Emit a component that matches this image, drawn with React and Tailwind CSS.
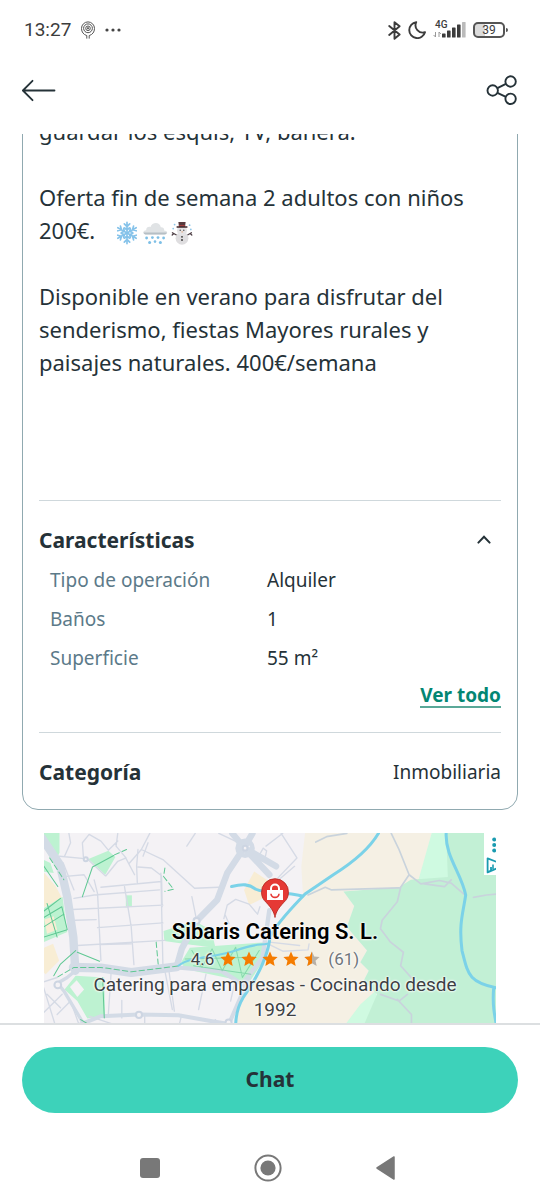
import React, { useState } from 'react';

const FEATURES = [
  { label: 'Tipo de operación', value: 'Alquiler' },
  { label: 'Baños', value: '1' },
  { label: 'Superficie', value: '55 m²' },
];

const SIGNAL_BARS = [
  { x: 0, h: 4 },
  { x: 5, h: 7 },
  { x: 10, h: 10 },
  { x: 15, h: 13 },
];

const STAR = 'M8 0.6 L10.2 5.6 L15.6 6.1 L11.5 9.7 L12.7 15 L8 12.2 L3.3 15 L4.5 9.7 L0.4 6.1 L5.8 5.6 Z';

function StatusBar() {
  return (
    <div className="flex h-[60px] items-center justify-between pl-6 pr-8 font-[Roboto,sans-serif] text-[#3c3c3c]">
      <div className="flex items-center">
        <span className="text-[19px] leading-6">13:27</span>
        <svg className="ml-2.5 h-[18px] w-[14px]" viewBox="0 0 14 18" fill="none" stroke="#555" strokeWidth="1">
          <path d="M5.8 17.6 V14.6 C2.5 13.6 0.5 11 0.5 7.5 A6.5 6.6 0 0 1 13.5 7.5 C13.5 11 11.5 13.6 8.2 14.6 V17.6" />
          <circle cx="7" cy="7.3" r="4.4" />
          <circle cx="7" cy="7.3" r="2.3" />
          <circle cx="7" cy="7.3" r="0.7" fill="#555" />
        </svg>
        <svg className="ml-2.5 h-1 w-4" viewBox="0 0 16 4" fill="#444">
          <circle cx="2" cy="2" r="1.6" />
          <circle cx="8" cy="2" r="1.6" />
          <circle cx="14" cy="2" r="1.6" />
        </svg>
      </div>

      <div className="flex items-center">
        <svg className="h-[19px] w-[13px]" viewBox="0 0 13 19" fill="none" stroke="#3c3c3c" strokeWidth="1.9" strokeLinejoin="round" strokeLinecap="round">
          <path d="M1.2 5 L11.6 13.6 L6.5 17.8 V1.2 L11.6 5.2 L1.2 14" />
        </svg>
        <svg className="ml-[7px] h-[18px] w-[18px]" viewBox="0 0 18 18" fill="none" stroke="#3c3c3c" strokeWidth="1.9" strokeLinejoin="round">
          <path d="M8.2 1.2 A8 8 0 1 0 17 11.2 A7.3 7.3 0 0 1 8.2 1.2 Z" />
        </svg>
        <div className="relative ml-[7px] h-[18px] w-[33px]">
          <span className="absolute left-0.5 -top-0.5 text-[10px] font-medium leading-3">4G</span>
          <svg className="h-[18px] w-[33px]" viewBox="0 0 33 18">
            <path d="M2.5 11 V16 L0.6 14 M6 16 V11 L7.9 13" fill="none" stroke="#999" strokeWidth="1" />
            <g transform="translate(9 0)">
              {SIGNAL_BARS.map(b => (
                <rect key={b.x} x={b.x} y={16.5 - b.h} width="3.6" height={b.h} rx="0.6" fill="#3c3c3c" />
              ))}
              <rect x="20" y="1" width="3.6" height="15.5" rx="0.6" fill="#bbb" />
            </g>
          </svg>
        </div>
        <div className="ml-[7px] flex items-center">
          <span className="flex h-4 w-8 items-center justify-center rounded-[5px] border-2 border-[#555] bg-[linear-gradient(90deg,#dcdcdc_35%,white_35%)] text-xs leading-3">39</span>
          <span className="ml-px h-1 w-0.5 rounded-r bg-[#555]" />
        </div>
      </div>
    </div>
  );
}

function TopBar() {
  return (
    <header className="flex h-[74px] items-start justify-between px-[22px] pt-[15px]">
      <button type="button" aria-label="Volver">
        <svg className="h-[30px] w-[34px]" viewBox="0 0 34 30" fill="none" stroke="#253238" strokeWidth="1.8" strokeLinecap="round" strokeLinejoin="round">
          <path d="M32.5 15.5 H1.2 M10.5 5.8 L0.9 15.5 L10.5 25.2" />
        </svg>
      </button>
      <button type="button" aria-label="Compartir">
        <svg className="h-[30px] w-[32px]" viewBox="0 0 32 30" fill="none" stroke="#253238" strokeWidth="1.9">
          <circle cx="6.7" cy="15.5" r="5.2" />
          <circle cx="24.6" cy="6.5" r="5.2" />
          <circle cx="24.6" cy="23.8" r="5.2" />
          <path d="M11.4 13.2 L19.9 8.8 M11.4 17.8 L19.9 21.8" />
        </svg>
      </button>
    </header>
  );
}

function Snowflake() {
  return (
    <svg className="h-6 w-6" viewBox="0 0 24 24" fill="none" stroke="#86c3ea" strokeWidth="1.7" strokeLinecap="round">
      {[0, 60, 120, 180, 240, 300].map(a => (
        <path key={a} transform={`rotate(${a} 12 12)`} d="M12 12 V1.4 M12 5.6 L9.3 2.9 M12 5.6 L14.7 2.9 M12 9 L9.6 6.8 M12 9 L14.4 6.8" />
      ))}
    </svg>
  );
}

function SnowCloud() {
  return (
    <svg className="h-6 w-[26px]" viewBox="0 0 26 24">
      <path d="M4.5 13.5 C0.5 13.5 0.2 9.6 4.2 9.2 C4 6.4 6.6 5 8.6 6 C9.6 1.2 17.6 0 18.8 6.2 C21.4 6 22.6 7.6 22 9.4 C26.4 9.6 26 13.5 22 13.5 Z" fill="#e0e3e5" />
      <path d="M1.5 11.4 H24.8 C24.6 12.8 23.6 13.6 22 13.6 H4.5 C2.8 13.6 1.8 12.8 1.5 11.4 Z" fill="#b6bfc5" />
      <g fill="#7dbfe6">
        <circle cx="4.6" cy="17" r="1.4" />
        <circle cx="10.4" cy="16.6" r="1.4" />
        <circle cx="16" cy="16.6" r="1.4" />
        <circle cx="21.6" cy="17" r="1.4" />
        <circle cx="7.6" cy="21.4" r="1.5" />
        <circle cx="13" cy="20.6" r="1.3" />
        <circle cx="18.4" cy="21.4" r="1.5" />
      </g>
    </svg>
  );
}

function Snowman() {
  return (
    <svg className="h-6 w-[22px]" viewBox="0 0 22 24">
      <path d="M5.4 14 L1.4 11.8 M1.2 14 L2.8 12.6 M16.6 14 L20.4 11.8 M20.8 14 L19.2 12.6" stroke="#4e3f45" strokeWidth="1.3" strokeLinecap="round" />
      <circle cx="11" cy="17.3" r="6.4" fill="#dfdee0" />
      <circle cx="11" cy="9.6" r="5" fill="#e5e4e6" />
      <path d="M7.4 1 H14.6 L14 6 H8 Z" fill="#573a3e" />
      <path d="M5.6 5.2 H16.4 V6.8 H5.6 Z" fill="#4b3135" />
      <path d="M7.9 4 H14.1 V5 H7.9 Z" fill="#a33d3d" />
      <circle cx="9.2" cy="9.2" r="0.7" fill="#444" />
      <circle cx="12.8" cy="9.2" r="0.7" fill="#444" />
      <path d="M10.6 10.3 L12.4 11 L10.6 11.4 Z" fill="#e08a4c" />
      <circle cx="11" cy="15.8" r="0.9" fill="#333" />
      <circle cx="11" cy="19" r="0.9" fill="#333" />
      <g fill="#8fc6e8">
        <circle cx="3.6" cy="3.6" r="0.9" />
        <circle cx="2.2" cy="7.6" r="0.9" />
        <circle cx="18.6" cy="4.2" r="0.9" />
        <circle cx="19.8" cy="8.4" r="0.9" />
      </g>
    </svg>
  );
}

function StreetMap() {
  return (
    <svg className="absolute inset-0 h-full w-full" viewBox="24 21 1356 573" preserveAspectRatio="xMidYMin slice" fill="none" strokeLinejoin="round" strokeLinecap="round" aria-hidden="true">
      <rect x="0" y="0" width="1400" height="700" fill="#f4f2f5" />

      {/* built-up and open land */}
      <g fill="#f5f0e4">
        <path d="M806 21 H1182 L1145 165 L1085 182 L920 195 L952 238 L930 300 L990 370 L970 405 L995 430 L980 460 L1020 490 L920 597 H600 L604 550 L690 400 L700 310 L800 208 L795 120 Z" />
        <path d="M655 135 L700 165 L690 210 L640 235 L625 190 Z" fill="#f8edd4" />
        <path d="M24 130 L66 180 L85 215 L24 245 Z" fill="#f8edd4" />
        <path d="M24 365 L58 350 L76 400 L36 440 L24 430 Z" fill="#f8edd4" />
      </g>
      <path d="M1182 21 H1228 L1232 160 L1140 170 Z M920 597 L970 530 L1015 490 L1030 540 L980 597 Z" fill="#cffae1" />
      <path d="M1225 21 H1400 V620 H968 L1020 500 L980 460 L995 430 L970 405 L990 370 L930 300 L952 238 L920 195 L1085 182 L1120 160 L1230 152 Z" fill="#c2f0d5" />

      {/* parks */}
      <g fill="#bdf2d1">
        <path d="M28 21 H77 V80 L60 115 L30 60 Z" />
        <path d="M163 98 L222 74 L243 92 L213 145 Z" />
        <path d="M274 206 H292 V240 H274 Z" />
        <path d="M24 98 L50 110 L60 140 L24 135 Z" />
        <path d="M24 248 L86 210 L100 315 L30 345 L24 330 Z" />
        <path d="M125 445 L210 450 L212 562 L160 572 L130 520 L92 486 Z" />
        <path d="M386 312 L478 282 L528 310 L540 362 L462 352 L388 342 Z" />
        <path d="M438 405 L464 362 L694 345 L676 410 L640 465 L450 425 Z" />
      </g>
      <path d="M32 278 L60 268 L70 308 L40 320 Z" fill="#f8edd4" />
      <path d="M108 478 L128 458 L150 486 L130 508 Z" fill="#f4f2f5" />

      {/* minor streets */}
      <g stroke="#d5dae5" strokeWidth="4">
        <path d="M77 90 L160 98 L213 148 M105 22 L110 50 L92 90 M148 92 L145 50 L165 25 L200 45 L222 72 M222 72 L250 45 M250 22 L245 60 L272 92 L300 145 M285 110 L320 70 L345 22 M320 70 L384 100 L478 185 L550 182 M215 148 L250 105 L275 95" />
        <path d="M95 150 L150 145 L180 195 M88 110 L120 190 M120 215 L180 205 L374 190 M180 160 L190 200 L200 400 M200 182 L380 165 M310 122 L350 125 L380 148 L382 240 M310 70 L306 120 L308 168 M115 248 L384 235 M124 280 L186 278 M190 302 L384 288 M270 180 L290 300 L298 412 M378 140 L384 410 M130 355 L390 340 M196 352 L290 350" />
        <path d="M455 60 L480 22 M470 210 L484 280 M550 22 L610 50 M565 275 L575 235 L600 218 L640 232 L665 262 L672 240 M580 290 L568 262 M390 430 L412 545 M402 430 L418 550 M512 440 L490 545 M600 455 L585 520 M70 560 L110 520 L135 590 M24 465 L70 450 M40 500 L80 540 M24 560 L85 500 M165 565 L240 590 M262 518 V570 M440 560 L430 600 M540 575 L520 600 M330 560 V600 M230 440 L222 560 M30 480 L64 590" />
        <path d="M666 94 L682 66 L692 74 L688 92 L668 84 M735 22 L782 95 L725 155 M740 22 L690 60 M775 120 L722 165 M696 350 L740 372 L815 368 L818 350 M700 345 L790 355 M340 50 L325 90" />
      </g>

      {/* country roads */}
      <g stroke="#c9d3dc" strokeWidth="5">
        <path d="M1062 22 L1085 70 L1115 145 L1150 172 L1205 162 L1240 170 L1280 205 M1115 145 L1090 182 L1080 225 L1035 280 L1030 305 L1060 345 L1098 375 L1090 415 L1130 460 M815 205 L866 182 L885 190 L1085 184 M838 48 L870 32 L930 22 M1160 172 L1220 180 L1240 160 M1306 212 L1345 205 L1380 202 M1030 500 L1085 520 L1110 500 M1080 515 L1122 560 V600" />
      </g>

      {/* main roads */}
      <g stroke="#d3dbe6">
        <path d="M24 35 L78 115 L100 210 L118 330 L124 430" strokeWidth="25" />
        <path d="M118 420 L200 422 L290 435 L425 418" strokeWidth="27" />
        <path d="M425 418 L440 365 L484 282 L545 220 L575 140 L625 65" strokeWidth="19" />
        <path d="M625 65 L650 22 M625 65 L590 22 M625 65 L700 145 M625 65 L720 120" strokeWidth="19" />
        <path d="M425 420 L560 432 L620 470 L680 390 L700 250" strokeWidth="13" />
        <path d="M120 597 L200 565 L312 560 L430 562 L530 580 L580 588 L640 450" strokeWidth="12" />
        <path d="M66 470 L100 450 L124 430 M74 470 L90 490 L150 590" strokeWidth="10" />
        <circle cx="628" cy="66" r="22" strokeWidth="14" />
      </g>
      <g fill="#f4f2f5" stroke="#cdd5e2" strokeWidth="6">
        <circle cx="628" cy="66" r="7" />
        <circle cx="484" cy="282" r="9" />
        <circle cx="313" cy="561" r="9" />
        <circle cx="579" cy="584" r="9" />
        <circle cx="72" cy="472" r="10" />
        <circle cx="155" cy="99" r="6" />
      </g>

      {/* bike lanes and footpaths */}
      <g stroke="#5fc893" strokeWidth="3">
        <path d="M145 210 L175 122 L238 88 M24 110 L72 180 M24 258 L80 215 M30 272 L84 240 L100 308 L30 330 M40 230 L70 330 M30 300 L90 262 M60 445 L80 410 L125 370 M130 375 L196 402 M205 450 L210 570 M140 575 L165 590" />
        <path d="M72 448 L120 420 L200 420 L290 433 L430 416 M240 86 L276 70 M390 125 L386 150 L416 188 L390 194 M364 345 L370 410 M48 95 L90 160" strokeDasharray="16 9" />
        <path d="M470 370 L500 420 L530 365 L560 430 L600 360 L620 450 L670 370 M450 395 L660 390 M475 415 L645 440" opacity="0.6" />
      </g>

      {/* water */}
      <g stroke="#7bd2e8" strokeWidth="9">
        <path d="M1024 22 C990 80 930 120 890 145 L806 202 C770 240 720 290 702 330 C695 400 650 470 622 510 C604 540 600 570 600 597" />
        <path d="M588 180 C620 172 640 172 660 188 C690 202 740 195 798 208" />
        <path d="M430 415 C470 385 540 392 600 370 S670 355 694 350" strokeWidth="6" />
        <path d="M1225 22 C1222 90 1270 140 1283 205 C1275 260 1262 290 1272 370 C1290 440 1290 465 1380 482 M1366 482 C1362 530 1368 560 1376 600" />
      </g>
    </svg>
  );
}

function MapAd() {
  return (
    <section className="relative mx-11 mt-[23px] overflow-hidden pb-1 font-[Roboto,sans-serif]">
      <StreetMap />

      <div className="relative flex flex-col items-center pl-2.5 pt-[45px] text-center [text-shadow:0_0_2px_#fff,0_0_2px_#fff,0_0_3px_#fff]">
        <svg className="h-10 w-7" viewBox="0 0 28 40">
          <path d="M14 39.5 C13 34 10.5 30 5.2 24.4 A13.5 13.5 0 1 1 22.8 24.4 C17.5 30 15 34 14 39.5 Z" fill="#e53935" stroke="#b3261e" strokeWidth="0.8" />
          <path d="M6 12 H22 V22 H6 Z" fill="white" />
          <path d="M10 13 V10.5 A4 4 0 0 1 18 10.5 V13" fill="none" stroke="white" strokeWidth="2" />
          <path d="M10 15.8 A4 3.6 0 0 0 18 15.8" fill="none" stroke="#e53935" strokeWidth="1.6" />
        </svg>
        <h3 className="text-[22px] font-semibold leading-7 text-black">Sibaris Catering S. L.</h3>
        <div className="flex h-[26px] items-center">
          <span className="text-[17px] leading-6 text-[#3c4043]">4.6</span>
          <div className="ml-1.5 flex gap-[5px]">
            {[0, 1, 2, 3].map(i => (
              <svg key={i} className="size-4" viewBox="0 0 16 16"><path d={STAR} fill="#f57c00" /></svg>
            ))}
            <svg className="size-4" viewBox="0 0 16 16">
              <path d={STAR} fill="#b8b0a6" />
              <path d="M8 0.6 V12.2 L3.3 15 L4.5 9.7 L0.4 6.1 L5.8 5.6 Z" fill="#f57c00" />
            </svg>
          </div>
          <span className="ml-2 text-[17px] leading-6 text-[#70757a]">(61)</span>
        </div>
        <p className="max-w-[400px] text-[19px] leading-[25px] text-[#3c4043]">
          Catering para empresas - Cocinando desde 1992
        </p>
      </div>

      <button type="button" aria-label="Opciones del anuncio" className="absolute right-0 top-0 bg-white">
        <svg className="h-[42px] w-3" viewBox="0 0 12 42">
          <g fill="#1a9bb0">
            <circle cx="10.2" cy="6.5" r="2" />
            <circle cx="10.2" cy="12" r="2" />
            <circle cx="10.2" cy="17.5" r="2" />
          </g>
          <path d="M13 29 L3.6 25.4 V39.4 L13 35.4 M3.6 39.4 L7 37.6 V34" fill="none" stroke="#1a9bb0" strokeWidth="1.8" strokeLinejoin="round" />
          <path d="M9 31.6 V36" stroke="#1a9bb0" strokeWidth="1.6" />
        </svg>
      </button>
    </section>
  );
}

function Listing() {
  const [open, setOpen] = useState(true);

  return (
    <article className="mx-[22px] -mt-5 rounded-2xl border border-[#90a9b0] px-4 pb-[22px]">
      <div className="min-h-[385px] text-[22px] leading-[33px]">
        <p>guardar los esquís, TV, bañera.</p>
        <p className="mt-[33px]">
          Oferta fin de semana 2 adultos con niños 200€.
          <span className="ml-5 inline-flex gap-[3px] align-middle" role="img" aria-label="nieve">
            <Snowflake />
            <SnowCloud />
            <Snowman />
          </span>
        </p>
        <p className="mt-[33px]">
          Disponible en verano para disfrutar del senderismo, fiestas Mayores rurales y paisajes naturales. 400€/semana
        </p>
      </div>

      <div className="border-t border-[#cfd8dc] pt-6">
        <h2 className="text-[21px] font-bold leading-[30px]">
          <button type="button" aria-expanded={open} onClick={() => setOpen(!open)} className="flex w-full items-center justify-between pr-2.5">
            Características
            <svg className={`h-3 w-3.5 ${open ? '' : 'rotate-180'}`} viewBox="0 0 14 12" fill="none" stroke="#253238" strokeWidth="2" strokeLinecap="round">
              <path d="M1.4 8.6 L7 2.8 L12.6 8.6" />
            </svg>
          </button>
        </h2>
        {open && (
          <table className="ml-[11px] mt-1.5 text-left text-[19px]">
            <tbody>
              {FEATURES.map(f => (
                <tr key={f.label} className="h-[39px]">
                  <th scope="row" className="w-[217px] p-0 font-normal text-[#5c7a89]">{f.label}</th>
                  <td className="p-0">{f.value}</td>
                </tr>
              ))}
            </tbody>
          </table>
        )}
        <div className="flex h-9 items-center justify-end">
          <a href="#todo" className="border-b-2 border-[#5aa898] text-[19px] font-bold leading-[22px] text-[#038673]">Ver todo</a>
        </div>
      </div>

      <div className="mt-[18px] flex items-center justify-between border-t border-[#cfd8dc] pt-6 leading-[30px]">
        <h2 className="text-[21px] font-bold">Categoría</h2>
        <span className="text-[19px]">Inmobiliaria</span>
      </div>
    </article>
  );
}

function BottomBar() {
  return (
    <footer className="border-t-2 border-[#dcdfe1] bg-white">
      <div className="px-[22px] pt-[22px]">
        <button type="button" className="h-[66px] w-full rounded-full bg-[#3dd2ba] text-[21px] font-bold text-[#253238]">Chat</button>
      </div>
      <nav className="flex h-[87px] items-center justify-center gap-[90px] pr-1 pt-[22px]">
        <button type="button" aria-label="Recientes">
          <svg className="size-7" viewBox="0 0 28 28"><rect x="4" y="4" width="20" height="20" rx="3" fill="#787878" /></svg>
        </button>
        <button type="button" aria-label="Inicio">
          <svg className="size-7" viewBox="0 0 28 28">
            <circle cx="14" cy="14" r="12.6" fill="none" stroke="#787878" strokeWidth="2" />
            <circle cx="14" cy="14" r="7.6" fill="#787878" />
          </svg>
        </button>
        <button type="button" aria-label="Atrás">
          <svg className="size-7" viewBox="0 0 28 28"><path d="M5 14 L22 3 V25 Z" fill="#787878" stroke="#787878" strokeWidth="1.5" strokeLinejoin="round" /></svg>
        </button>
      </nav>
    </footer>
  );
}

export default function App() {
  return (
    <div className="flex h-screen flex-col bg-white font-['Noto_Sans',sans-serif] text-[#253238]">
      <StatusBar />
      <TopBar />
      <main className="min-h-0 flex-1 overflow-hidden">
        <Listing />
        <MapAd />
      </main>
      <BottomBar />
    </div>
  );
}
